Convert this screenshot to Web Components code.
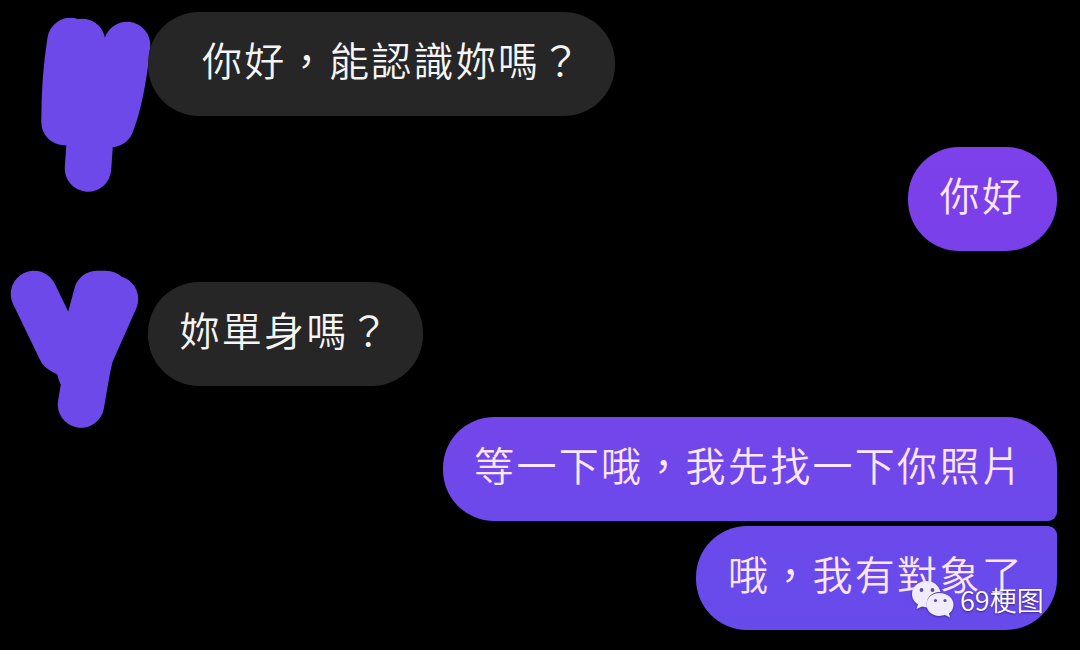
<!DOCTYPE html>
<html lang="zh-Hant">

<head>
  <meta charset="UTF-8">
  <meta name="viewport" content="width=device-width, initial-scale=1.0">
  <title>Chat</title>
  <style>
    body {
      margin: 0;
      background: #000;
      overflow: hidden;
    }
  </style>
</head>

<body>
  <chat-thread>
    <chat-row>
      <chat-scribble slot="avatar" shape="first"></chat-scribble>
      <chat-bubble class="indent">你好，能認識妳嗎？</chat-bubble>
    </chat-row>
    <chat-row mine>
      <chat-bubble tone="violet">你好</chat-bubble>
    </chat-row>
    <chat-row>
      <chat-scribble slot="avatar" shape="second"></chat-scribble>
      <chat-bubble>妳單身嗎？</chat-bubble>
    </chat-row>
    <chat-row mine>
      <chat-bubble tone="purple" join="bottom">等一下哦，我先找一下你照片</chat-bubble>
      <chat-bubble tone="indigo" join="top">哦，我有對象了</chat-bubble>
    </chat-row>
    <chat-watermark slot="overlay">69梗图</chat-watermark>
  </chat-thread>

  <script>
    class ChatThread extends HTMLElement {
      constructor() {
        super();
        this.attachShadow({ mode: 'open' }).innerHTML = `
<style>
  :host {
    position: relative;
    display: flex;
    flex-direction: column;
    gap: 31.5px;
    box-sizing: border-box;
    width: 1080px;
    height: 650px;
    padding: 12px 23px 0 0;
    overflow: hidden;
    background: #000;
    font-family: "Noto Sans CJK TC", "Noto Sans", sans-serif;
  }
</style>
<slot></slot>
<slot name="overlay"></slot>
    `;
      }
      static {
        customElements.define('chat-thread', this);
      }
    }

    class ChatRow extends HTMLElement {
      constructor() {
        super();
        this.attachShadow({ mode: 'open' }).innerHTML = `
<style>
  :host {
    display: flex;
    align-items: flex-start;
  }
  .avatar {
    flex: none;
    width: 148px;
    height: 103.5px;
  }
  .messages {
    display: flex;
    flex-direction: column;
    align-items: flex-start;
    gap: 5.5px;
  }
  :host([mine]) {
    justify-content: flex-end;
  }
  :host([mine]) .avatar {
    display: none;
  }
  :host([mine]) .messages {
    align-items: flex-end;
  }
</style>
<div class="avatar"><slot name="avatar"></slot></div>
<div class="messages"><slot></slot></div>
    `;
      }
      static {
        customElements.define('chat-row', this);
      }
    }

    class ChatBubble extends HTMLElement {
      constructor() {
        super();
        this.attachShadow({ mode: 'open' }).innerHTML = `
<style>
  :host {
    display: block;
    box-sizing: border-box;
    height: 103.5px;
    padding: 0 32px 0 31.5px;
    border-radius: 51px;
    background: #262626;
    color: #f5f5f5;
    font-size: 40px;
    font-weight: 350;
    line-height: 95px;
    letter-spacing: 2.3px;
    white-space: nowrap;
  }
  :host(.indent) {
    padding-left: 54px;
  }
  :host([tone]) {
    color: #fbe6fd;
    padding-right: 33px;
  }
  :host([tone="violet"]) {
    background: linear-gradient(#7d40ea, #7a40ea);
  }
  :host([tone="purple"]) {
    background: linear-gradient(#7446ea, #6c49ea);
  }
  :host([tone="indigo"]) {
    background: linear-gradient(#6c49ea, #674bea);
  }
  :host([join="bottom"]) {
    border-bottom-right-radius: 9px;
  }
  :host([join="top"]) {
    border-top-right-radius: 9px;
  }
</style>
<slot></slot>
    `;
      }
      static {
        customElements.define('chat-bubble', this);
      }
    }

    // Marker strokes that cover the profile pictures
    const SCRIBBLES = {
      first: {
        top: 12,
        path: `M70.500 41 Q64.500 78 64.500 122 L82 122 L82 42 L88 62 L88 110
          M127 45 Q122 96 111 124 L92 108 L110 64
          M91 125 L88 168.500`,
      },
      second: {
        top: 282,
        path: `M34 294 L61 350 L77 359 L81 373 L90 340
          M115 299 L91 353 Q88 362 81 404.500
          M97 294 L106 294 L88 340
          M97 294 L86 335`,
      },
    };

    class ChatScribble extends HTMLElement {
      constructor() {
        super();
        this.attachShadow({ mode: 'open' });
      }
      connectedCallback() {
        const { top, path } = SCRIBBLES[this.getAttribute('shape')];
        this.shadowRoot.innerHTML = `
<style>
  :host {
    display: block;
    height: 100%;
  }
  svg {
    display: block;
    overflow: visible;
  }
  path {
    fill: none;
    stroke: #6e49e9;
    stroke-width: 46.5;
    stroke-linecap: round;
    stroke-linejoin: round;
  }
</style>
<svg width="148" height="103.5" viewBox="0 ${top} 148 103.5"><path d="${path}"/></svg>
    `;
      }
      static {
        customElements.define('chat-scribble', this);
      }
    }

    class ChatWatermark extends HTMLElement {
      constructor() {
        super();
        this.attachShadow({ mode: 'open' }).innerHTML = `
<style>
  :host {
    position: absolute;
    left: 911px;
    top: 579px;
    display: flex;
    align-items: center;
    gap: 6px;
    color: #fff;
    font-family: "Noto Sans CJK SC", sans-serif;
    font-size: 27px;
    font-weight: 350;
    line-height: 42px;
    white-space: nowrap;
    text-shadow: 0 1px 2px rgba(40, 20, 90, .7);
  }
  svg {
    flex: none;
    filter: drop-shadow(0 1px 1px rgba(40, 20, 90, .6));
  }
</style>
<svg width="43" height="42" viewBox="0 0 43 42">
  <path fill="#f1ecfd" d="M15.500 2 C7.500 2 1 7.500 1 15 C1 19.500 3.500 23 7 25.500 L5.500 30 L11 27.500 L16 28.500 C14 19 21 12.500 29.500 13 C28 6.500 22.500 2 15.500 2 Z"/>
  <path fill="#f1ecfd" d="M28.500 14 C21 14 15.500 19 15.500 25.500 C15.500 32 21 37 28.500 37 L34 36 L39 38.500 L38 34.500 C41 32.500 42.500 29 42.500 25.500 C42.500 19 36 14 28.500 14 Z"/>
  <g fill="#5f4b9e">
    <circle cx="10.500" cy="11" r="1.900"/>
    <circle cx="21.500" cy="11" r="1.900"/>
    <circle cx="24.500" cy="21.500" r="1.600"/>
    <circle cx="34" cy="21.500" r="1.600"/>
  </g>
</svg>
<span><slot></slot></span>
    `;
      }
      static {
        customElements.define('chat-watermark', this);
      }
    }
  </script>
</body>

</html>
